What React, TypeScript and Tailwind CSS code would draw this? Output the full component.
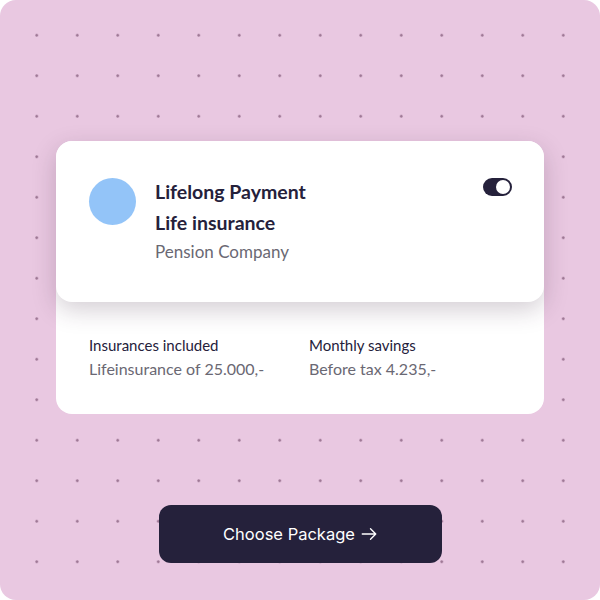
export default function App() {
  return (
    <div className="w-[600px] h-[600px] bg-white">
      <div className="w-[600px] h-[600px] rounded-[16px] bg-[#e9c8e1] bg-[radial-gradient(circle,#9c7693_1px,transparent_1.6px)] bg-[size:40.5px_40.5px] bg-[position:16.5px_15px] pt-[141px] font-['Lato',sans-serif]">
        <div className="ml-[56px] w-[488px] h-[273px] rounded-[16px] bg-white flex flex-col">
          <div className="h-[161px] rounded-[16px] bg-white shadow-[0_8px_24px_rgba(60,30,60,0.22)] flex px-[33px] pt-[37px] relative">
            <div className="w-[47px] h-[47px] rounded-full bg-[#93c4f8] shrink-0" />
            <div className="ml-[19px] -mt-[1px] flex flex-col">
              <div className="text-[19.5px] leading-[30px] font-bold text-[#25213b]">Lifelong Payment</div>
              <div className="text-[19.5px] leading-[30px] font-bold text-[#25213b] mt-[1px]">Life insurance</div>
              <div className="text-[17px] leading-[28px] text-[#6a6873]">Pension Company</div>
            </div>
            <div className="absolute right-[32px] top-[37px] w-[29px] h-[18px] rounded-full bg-[#25213b] flex items-center justify-end px-[2px]">
              <div className="w-[14px] h-[14px] rounded-full bg-white" />
            </div>
          </div>
          <div className="flex pl-[33px] pt-[32px]">
            <div className="w-[220px]">
              <div className="text-[15px] leading-[23px] text-[#25213b]">Insurances included</div>
              <div className="text-[16px] leading-[23px] text-[#6a6873]">Lifeinsurance of 25.000,-</div>
            </div>
            <div>
              <div className="text-[15px] leading-[23px] text-[#25213b]">Monthly savings</div>
              <div className="text-[16px] leading-[23px] text-[#6a6873]">Before tax 4.235,-</div>
            </div>
          </div>
        </div>
        <div className="flex justify-center mt-[91px] pl-[1px]">
          <button className="w-[283px] h-[58px] rounded-[12px] bg-[#25213b] text-white text-[16.5px] font-['Inter',sans-serif] flex items-center justify-center gap-[5px]">
            Choose Package
            <svg width="18" height="18" viewBox="0 0 24 24" fill="none" stroke="currentColor" strokeWidth="1.8" strokeLinecap="round" strokeLinejoin="round">
              <path d="M3 12h18M14 5l7 7-7 7" />
            </svg>
          </button>
        </div>
      </div>
    </div>
  );
}
